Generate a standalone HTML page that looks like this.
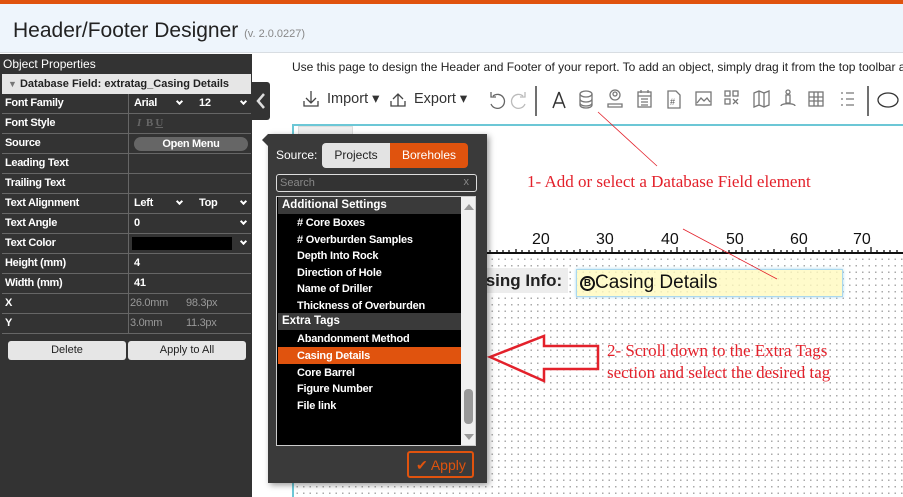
<!DOCTYPE html>
<html><head><meta charset="utf-8"><style>
*{box-sizing:border-box;margin:0;padding:0}
body{width:903px;height:497px;overflow:hidden;background:#fff;font-family:"Liberation Sans",Arial,sans-serif;position:relative}
.abs{position:absolute}
#top{left:0;top:0;width:903px;height:4px;background:#e0530e}
#hdr{left:0;top:4px;width:903px;height:49px;background:#eef5fc;border-bottom:1px solid #d8dde2}
#hdr h1{position:absolute;left:13px;top:15px;font-weight:normal;font-size:21px;color:#222}
#hdr h1 small{font-size:11px;color:#888}
#lp{left:0;top:54px;width:252px;height:443px;background:#333}
.row{position:absolute;left:2px;width:249px;height:20px;border-bottom:1px solid #666;color:#fff;font-size:11px;font-weight:bold;letter-spacing:-0.3px}
.row .l{position:absolute;left:3px;top:3px}
.row .r{position:absolute;left:126px;top:0;height:20px;width:123px;border-left:1px solid #666}
.row .r span{position:absolute;top:3px}
.chev{position:absolute;top:5px;width:5px;height:5px;border-right:2px solid #fff;border-bottom:2px solid #fff;transform:rotate(45deg)}
#canvas{left:292px;top:124px;width:611px;height:373px;border-top:2px solid #6cc7d6;border-left:2px solid #6cc7d6;background:#fff}
#grid{left:294px;top:256px;width:609px;height:241px;background-image:radial-gradient(circle,#aaa 0.8px,transparent 1px);background-size:6.5px 6.5px}
#pop{left:268px;top:134px;width:219px;height:349px;background:#3a3a3a;box-shadow:2px 2px 6px rgba(0,0,0,.4)}
.li{position:absolute;left:20px;font-size:11px;color:#fff;font-weight:bold;letter-spacing:-0.2px}
.sec{position:absolute;left:1px;width:183px;height:17px;background:#3a3a3a;color:#fff;font-size:11.5px;font-weight:bold;padding:2px 0 0 4px}
.ann{font-family:"Liberation Serif",serif;color:#e3212b;font-size:17px}
.tb{position:absolute;top:88px;color:#555;font-size:16px}
</style></head><body>
<div id="top" class="abs"></div>
<div id="hdr" class="abs"><h1>Header/Footer Designer <small>(v. 2.0.0227)</small></h1></div>

<div class="abs" style="left:292px;top:60px;font-size:12px;color:#222;white-space:nowrap">Use this page to design the Header and Footer of your report. To add an object, simply drag it from the top toolbar a</div>

<svg class="abs" style="left:295px;top:84px" width="608" height="34" viewBox="0 0 608 34" fill="none" stroke="#444" stroke-width="1.3">
<path d="M16 7v12M11 14l5 5 5-5M9 17v5h14v-5"/>
<path d="M103 22V10M98 15l5-5 5 5M96 17v5h14v-5"/>
<path d="M198 12a7 7 0 1 1-2 8M196 8v5h5" stroke="#666"/>
<path d="M228 12a7 7 0 1 0 2 8M230 8v5h-5" stroke="#bbb"/>
<line x1="241" y1="2" x2="241" y2="32" stroke="#222"/>
<line x1="573" y1="2" x2="573" y2="32" stroke="#222"/>
<ellipse cx="593" cy="16" rx="10" ry="7" stroke="#333"/>
<g stroke="#777">
<ellipse cx="291" cy="10" rx="6" ry="3"/><path d="M285 10v11c0 4 12 4 12 0V10M285 15c0 4 12 4 12 0M285 19c0 4 12 4 12 0"/>
<circle cx="320" cy="11" r="5"/><circle cx="320" cy="10" r="2"/><path d="M313 20h14v3h-14z"/>
<rect x="343" y="8" width="13" height="15"/><path d="M343 12h13M346 15h7M346 18h7M346 21h7M346 6v3M353 6v3"/>
<path d="M373 7h8l4 4v13h-12z"/><text x="375" y="21" font-size="9" fill="#555" stroke="none">#</text>
<rect x="401" y="8" width="15" height="13"/><path d="M402 19l4-5 3 3 3-3 3 4"/>
<rect x="430" y="7" width="5" height="5"/><rect x="438" y="7" width="5" height="5"/><rect x="430" y="15" width="5" height="5"/><path d="M438 15l5 5M443 15l-5 5"/>
<path d="M459 9l5-2 5 2 5-2v14l-5 2-5-2-5 2zM464 7v14M469 9v14"/>
<circle cx="493" cy="8" r="2"/><path d="M491 11h4v8h-4zM486 22c0-3 14-3 14 0"/>
<rect x="514" y="8" width="14" height="14"/><path d="M514 13h14M514 17h14M519 8v14M523 8v14"/>
<path d="M546 9h2M546 15h2M546 21h2M551 9h8M551 15h8M551 21h8"/>
</g>
<path d="M264 8l-6 16M264 8l6 16M260 19h8" stroke="#333" stroke-width="1.5"/>
</svg>
<div class="tb" style="left:327px;top:91px;font-size:14.5px;color:#333">Import ▾</div>
<div class="tb" style="left:414px;top:91px;font-size:14.5px;color:#333">Export ▾</div>

<div id="canvas" class="abs"></div>
<div class="abs" style="left:298px;top:126px;width:55px;height:10px;background:#eee;border:1px solid #ddd"></div>
<div id="grid" class="abs"></div>
<svg class="abs" style="left:294px;top:228px" width="609" height="28">
<line x1="0" y1="25" x2="609" y2="25" stroke="#111" stroke-width="2"/>
<g font-size="16" fill="#111" font-family="Liberation Sans">
<text x="183" y="16">0</text><text x="238" y="16">20</text><text x="302" y="16">30</text><text x="367" y="16">40</text><text x="432" y="16">50</text><text x="496" y="16">60</text><text x="559" y="16">70</text></g>
<g stroke="#111" stroke-width="1.3">
<path d="M190 25v-6M254 25v-6M318 25v-6M383 25v-6M448 25v-6M512 25v-6M577 25v-6"/>
<path d="M196 25v-3M203 25v-3M209 25v-3M215 25v-3M222 25v-4M228 25v-3M235 25v-3M241 25v-3M248 25v-3M261 25v-3M267 25v-3M273 25v-3M280 25v-3M286 25v-4M293 25v-3M299 25v-3M306 25v-3M312 25v-3M325 25v-3M331 25v-3M338 25v-3M344 25v-3M351 25v-4M357 25v-3M364 25v-3M370 25v-3M377 25v-3M390 25v-3M396 25v-3M403 25v-3M409 25v-3M416 25v-4M422 25v-3M429 25v-3M435 25v-3M442 25v-3M454 25v-3M461 25v-3M467 25v-3M474 25v-3M480 25v-4M487 25v-3M493 25v-3M499 25v-3M506 25v-3M519 25v-3M525 25v-3M532 25v-3M538 25v-3M545 25v-4M551 25v-3M558 25v-3M564 25v-3M571 25v-3M583 25v-3M590 25v-3M596 25v-3M603 25v-3"/></g>
</svg>
<div class="abs" style="left:420px;top:268px;width:148px;height:25px;background:#ededed;font-weight:bold;font-size:17px;padding:3px 0 0 44px;color:#222;white-space:nowrap">Casing Info:</div>
<div class="abs" style="left:576px;top:269px;width:267px;height:28px;background:rgba(255,250,190,.8);border:1px solid #a9d8ee;box-shadow:0 0 3px #a9d8ee;font-size:19px;padding:2px 0 0 3px;color:#111;white-space:nowrap"><b style="border:2px solid #111;border-radius:50%;display:inline-block;width:15px;height:15px;line-height:11px;text-align:center;font-size:10px;vertical-align:2px">B</b>Casing Details</div>

<svg class="abs" style="left:0;top:0" width="903" height="497">
<path d="M598 112L657 166M683 229L777 279" stroke="#e3212b" stroke-width="0.8"/>
<polygon points="490,357 544,336 544,346 598,346 598,369 544,369 544,381" fill="none" stroke="#e3212b" stroke-width="2.5"/>
</svg>
<div class="abs ann" style="left:527px;top:172px">1- Add or select a Database Field element</div>
<div class="abs ann" style="left:607px;top:340px;line-height:22px">2- Scroll down to the Extra Tags<br>section and select the desired tag</div>

<div id="lp" class="abs">
<div class="abs" style="left:3px;top:3px;color:#fff;font-size:12px">Object Properties</div>
<div class="abs" style="left:2px;top:20px;width:249px;height:20px;background:#e6e6e6;font-size:11px;font-weight:bold;color:#222;padding:4px 0 0 6px"><span style="color:#777;font-size:9px">▼</span> Database Field: extratag_Casing Details</div>
<div class="row" style="top:40px"><span class="l">Font Family</span><div class="r"><span style="left:5px">Arial</span><i class="chev" style="left:48px"></i><span style="left:70px">12</span><i class="chev" style="left:112px"></i></div></div>
<div class="row" style="top:60px"><span class="l">Font Style</span><div class="r"><span style="left:8px;color:#666;font-family:'Liberation Serif';font-weight:bold"><i>I</i>&nbsp; B <u>U</u></span></div></div>
<div class="row" style="top:80px"><span class="l">Source</span><div class="r"><div style="position:absolute;left:5px;top:3px;width:114px;height:14px;background:#666;border-radius:7px;text-align:center;font-size:11px;line-height:14px">Open Menu</div></div></div>
<div class="row" style="top:100px"><span class="l">Leading Text</span><div class="r"></div></div>
<div class="row" style="top:120px"><span class="l">Trailing Text</span><div class="r"></div></div>
<div class="row" style="top:140px"><span class="l">Text Alignment</span><div class="r"><span style="left:5px">Left</span><i class="chev" style="left:48px"></i><span style="left:70px">Top</span><i class="chev" style="left:112px"></i></div></div>
<div class="row" style="top:160px"><span class="l">Text Angle</span><div class="r"><span style="left:5px">0</span><i class="chev" style="left:112px"></i></div></div>
<div class="row" style="top:180px"><span class="l">Text Color</span><div class="r"><div style="position:absolute;left:3px;top:3px;width:100px;height:13px;background:#000"></div><i class="chev" style="left:112px"></i></div></div>
<div class="row" style="top:200px"><span class="l">Height (mm)</span><div class="r"><span style="left:5px">4</span></div></div>
<div class="row" style="top:220px"><span class="l">Width (mm)</span><div class="r"><span style="left:5px">41</span></div></div>
<div class="row" style="top:240px"><span class="l">X</span><div class="r" style="font-weight:normal;color:#999"><span style="left:1px">26.0mm</span><span style="left:57px">98.3px</span></div></div>
<div class="row" style="top:260px"><span class="l">Y</span><div class="r" style="font-weight:normal;color:#999"><span style="left:1px">3.0mm</span><span style="left:57px">11.3px</span></div></div>
<div class="abs" style="left:8px;top:287px;width:118px;height:19px;background:#e6e6e6;border-radius:3px;text-align:center;font-size:11px;line-height:19px;color:#222">Delete</div>
<div class="abs" style="left:128px;top:287px;width:118px;height:19px;background:#e6e6e6;border-radius:3px;text-align:center;font-size:11px;line-height:19px;color:#222">Apply to All</div>
</div>
<div class="abs" style="left:252px;top:82px;width:18px;height:38px;background:#333;border-radius:0 3px 3px 0"></div>
<svg class="abs" style="left:252px;top:82px" width="18" height="38"><path d="M12 12l-6 7 6 7" stroke="#ddd" stroke-width="2.5" fill="none"/></svg>

<div id="pop" class="abs">
<div class="abs" style="left:-6px;top:0;width:0;height:0;border:6px solid transparent;border-right-color:#3a3a3a;border-left:0"></div>
<div class="abs" style="left:8px;top:14px;color:#fff;font-size:12px">Source:</div>
<div class="abs" style="left:54px;top:9px;width:68px;height:25px;background:#e3e3e3;border-radius:4px 0 0 4px;text-align:center;line-height:25px;font-size:12px;color:#222">Projects</div>
<div class="abs" style="left:122px;top:9px;width:78px;height:25px;background:#e0530e;border-radius:0 4px 4px 0;text-align:center;line-height:25px;font-size:12px;color:#fff">Boreholes</div>
<div class="abs" style="left:8px;top:40px;width:201px;height:18px;border:1px solid #ddd;border-radius:3px;background:#333;color:#888;font-size:11px;padding:2px 0 0 3px">Search<span style="position:absolute;right:7px;top:1px">x</span></div>
<div class="abs" style="left:8px;top:62px;width:200px;height:250px;background:#000;border:1px solid #ccc;overflow:hidden">
<div class="abs" style="left:184px;top:0;width:16px;height:250px;background:#f0f0f0"></div>
<div class="abs" style="left:187px;top:7px;width:0;height:0;border:5px solid transparent;border-bottom:6px solid #999;border-top:0"></div>
<div class="abs" style="left:187px;top:237px;width:0;height:0;border:5px solid transparent;border-top:6px solid #999;border-bottom:0"></div>
<div class="abs" style="left:187px;top:192px;width:9px;height:35px;background:#999;border-radius:4px"></div>
<div class="sec" style="top:0">Additional Settings</div>
<div class="li" style="top:20px">#&nbsp;Core Boxes</div>
<div class="li" style="top:37px"># Overburden Samples</div>
<div class="li" style="top:53px">Depth Into Rock</div>
<div class="li" style="top:70px">Direction of Hole</div>
<div class="li" style="top:86px">Name of Driller</div>
<div class="li" style="top:103px">Thickness of Overburden</div>
<div class="sec" style="top:116px">Extra Tags</div>
<div class="li" style="top:136px">Abandonment Method</div>
<div class="abs" style="left:1px;top:150px;width:183px;height:17px;background:#e0530e"></div>
<div class="li" style="top:153px">Casing Details</div>
<div class="li" style="top:170px">Core Barrel</div>
<div class="li" style="top:186px">Figure Number</div>
<div class="li" style="top:203px">File link</div>
</div>
<div class="abs" style="left:139px;top:317px;width:67px;height:27px;border:2px solid #e0530e;border-radius:3px;color:#e0530e;font-size:14px;padding:4px 0 0 7px">✔ Apply</div>
</div>
</body></html>
